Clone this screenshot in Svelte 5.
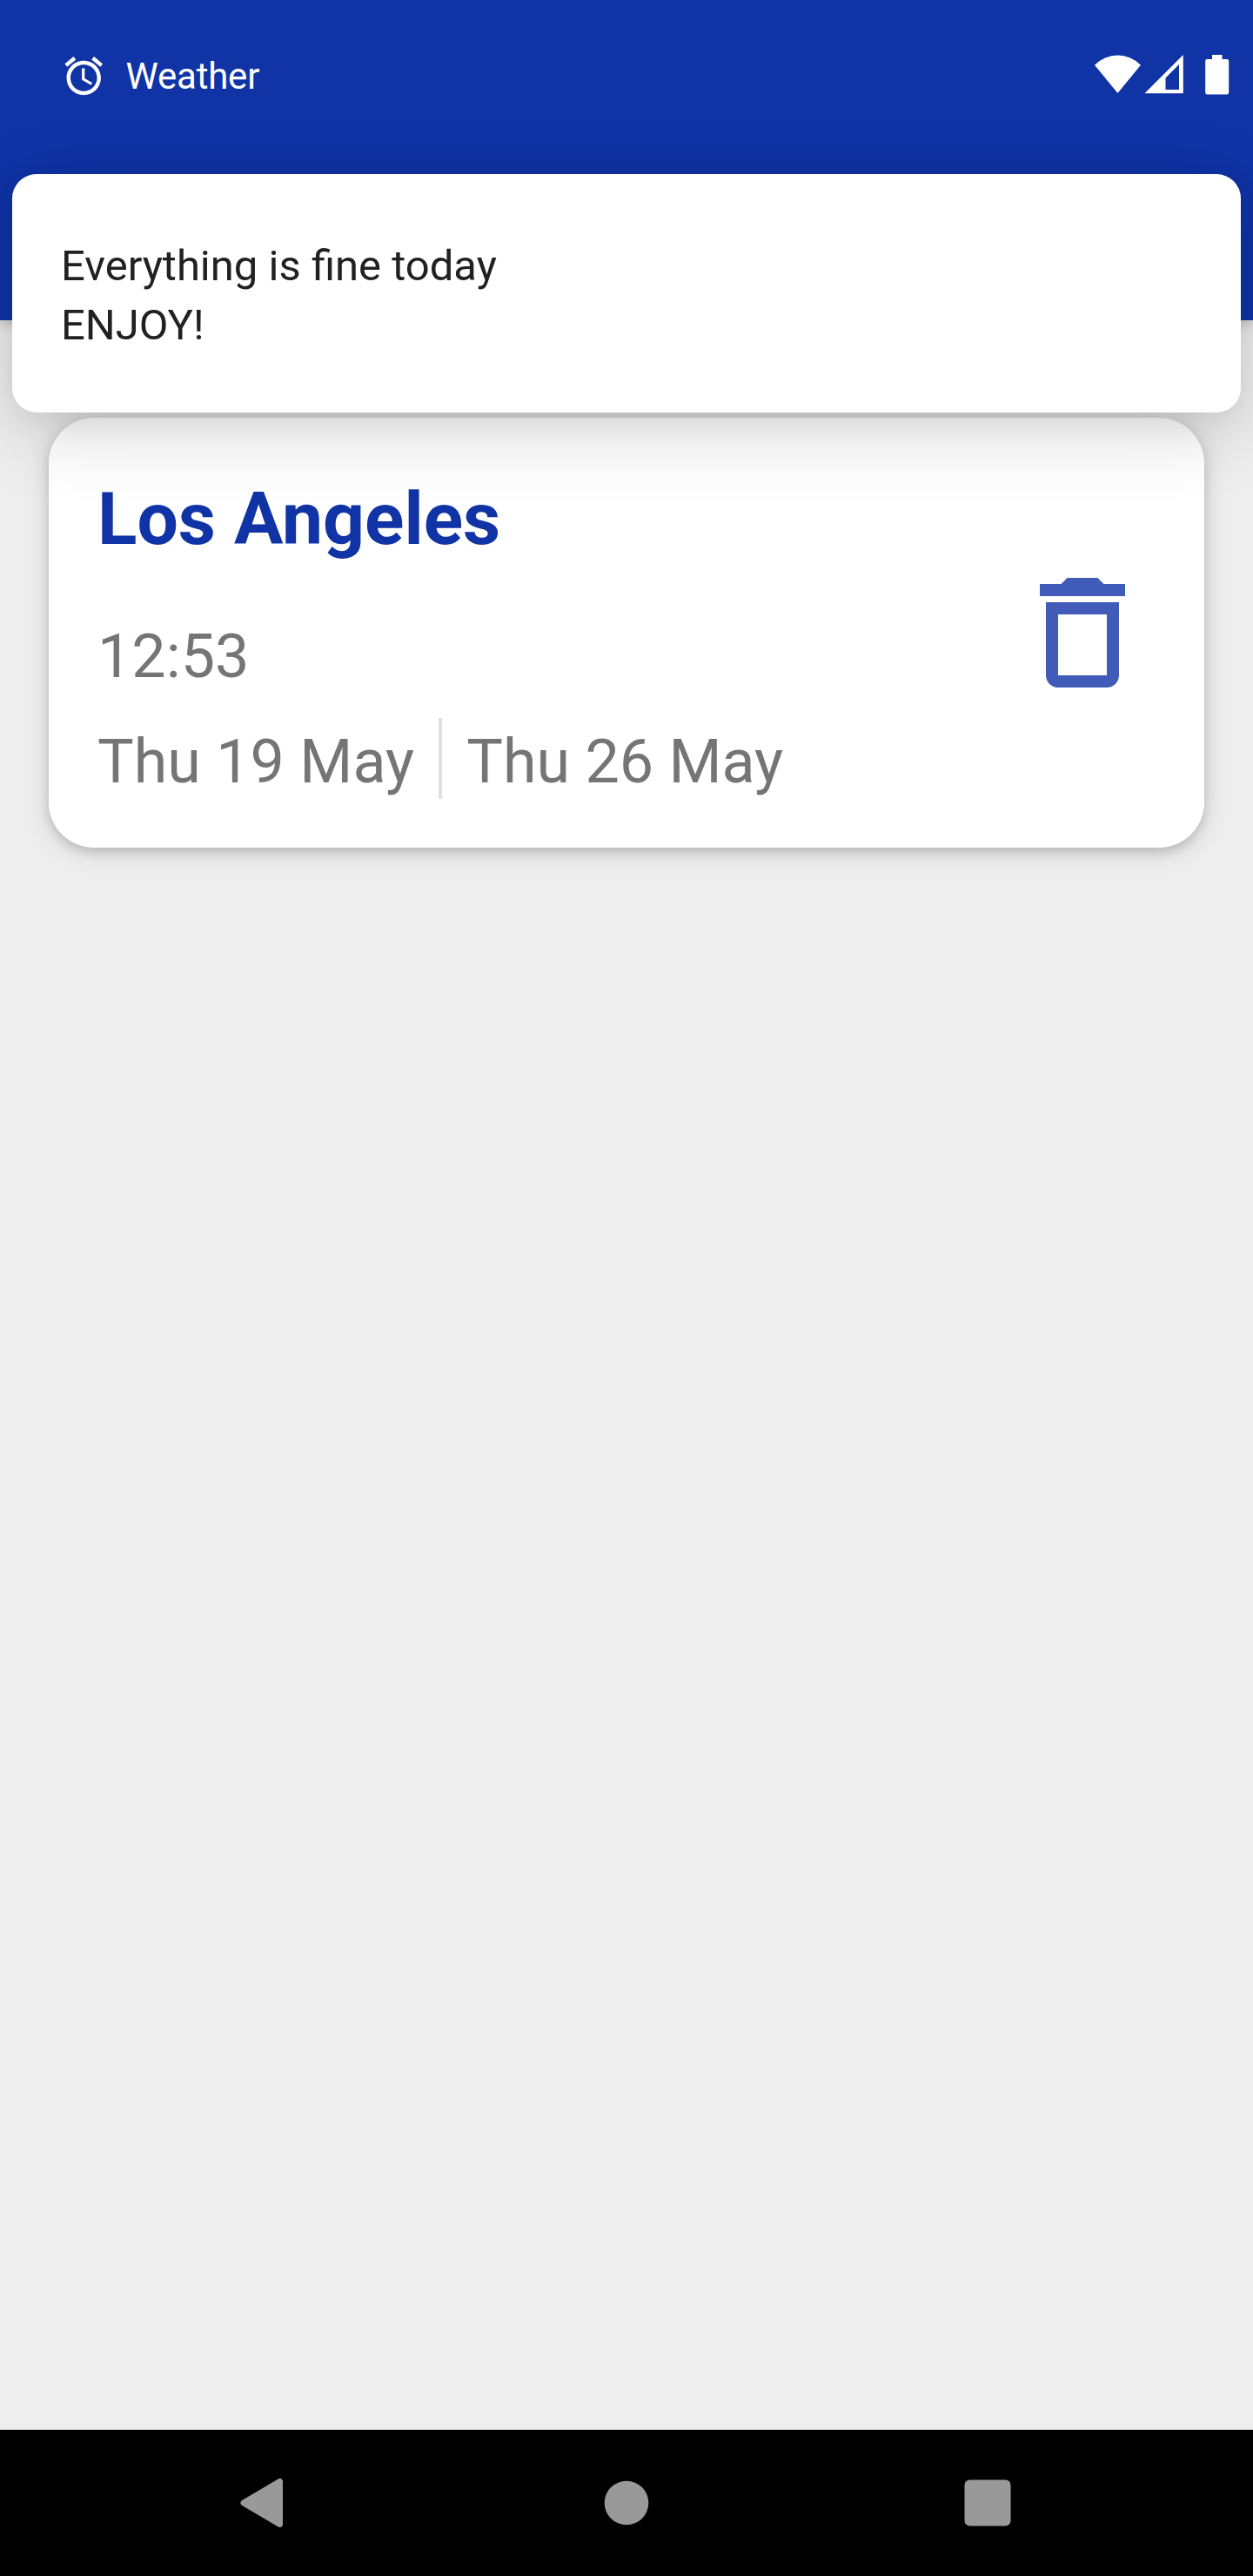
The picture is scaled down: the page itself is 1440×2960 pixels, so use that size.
<script>
  const city = {
    name: 'Los Angeles',
    time: '12:53',
    from: 'Thu 19 May',
    to: 'Thu 26 May'
  };
  const message = ['Everything is fine today', 'ENJOY!'];
</script>

<div class="screen">
  <header class="app-bar">
    <div class="status">
      <svg class="alarm" viewBox="0 0 24 24" aria-hidden="true">
        <path d="M22 5.72l-4.6-3.86-1.29 1.53 4.6 3.86L22 5.72zM7.88 3.39L6.6 1.86 2 5.71l1.29 1.53 4.59-3.85zM12.500 8H11v6l4.750 2.850.750-1.230-4-2.370V8zM12 4c-4.970 0-9 4.030-9 9s4.020 9 9 9c4.970 0 9-4.030 9-9s-4.030-9-9-9zm0 16c-3.870 0-7-3.130-7-7s3.130-7 7-7 7 3.130 7 7-3.130 7-7 7z" />
      </svg>
      <span class="title">Weather</span>
      <svg class="signals" viewBox="0 0 160 52" aria-hidden="true">
        <path d="M30.500 48L4 15.800A37 37 0 0 1 57 15.800Z" />
        <path fill-rule="evenodd" d="M61.500 48.300L105.800 4V48.300ZM85.500 44H101V15L85.500 30.500Z" />
        <path d="M139 4h11.500v5H156q2.200 0 2.200 2.200v36q0 2.200-2.200 2.200h-22.600q-2.200 0-2.200-2.200v-36q0-2.200 2.200-2.200H139z" />
      </svg>
    </div>
  </header>

  <main class="content">
    <article class="card">
      <div class="details">
        <h1>{city.name}</h1>
        <p class="time">{city.time}</p>
        <div class="dates">
          <span>{city.from}</span>
          <i class="divider"></i>
          <span>{city.to}</span>
        </div>
      </div>
      <button class="delete" aria-label="Delete">
        <svg viewBox="0 0 24 24">
          <path fill-rule="evenodd" d="M6 19c0 1.1.9 2 2 2h8c1.1 0 2-.9 2-2V7H6v12zM8 9h8v10H8V9zM15.5 4l-1-1h-5l-1 1H5v2h14V4h-3.5z" />
        </svg>
      </button>
    </article>
  </main>

  <nav class="nav">
    <svg viewBox="0 0 60 60"><path class="back" d="M5 30L46.500 5.500V54.500Z" /></svg>
    <svg viewBox="0 0 60 60"><circle cx="30" cy="30" r="25.300" /></svg>
    <svg viewBox="0 0 60 60"><rect x="3.500" y="3.500" width="53" height="53" rx="6" /></svg>
  </nav>

  <div class="snackbar" role="status">
    {#each message as line}
      <p>{line}</p>
    {/each}
  </div>
</div>

<style>
  :global(body) {
    margin: 0;
  }
  .screen {
    position: relative;
    display: flex;
    flex-direction: column;
    width: 1440px;
    height: 2960px;
    overflow: hidden;
    background: #eee;
    font-family: Roboto, sans-serif;
  }
  h1,
  p {
    margin: 0;
  }
  .app-bar {
    height: 368px;
    flex: none;
    background: #1033a6;
    box-shadow: 0 4px 14px rgba(0, 0, 0, 0.2);
  }
  .status {
    display: flex;
    align-items: center;
    height: 174px;
    padding: 0 26px 0 70px;
    color: #fff;
  }
  .status svg {
    fill: #fff;
  }
  .alarm {
    width: 52.5px;
    height: 52.5px;
  }
  .title {
    flex: 1;
    margin-left: 22px;
    font-size: 42px;
    line-height: 49px;
    padding-top: 1px;
    letter-spacing: -0.2px;
  }
  .signals {
    width: 160px;
    height: 52px;
    margin-top: -4px;
  }
  .content {
    flex: 1;
    padding: 112px 56px 0;
  }
  .card {
    display: flex;
    justify-content: space-between;
    box-sizing: border-box;
    height: 494px;
    padding: 68px 56px 56px;
    border-radius: 52px;
    background: #fff;
    box-shadow:
      0 5px 12px rgba(0, 0, 0, 0.14),
      0 4px 30px rgba(0, 0, 0, 0.14);
  }
  h1 {
    color: #1033a6;
    font-size: 84px;
    font-weight: 700;
    line-height: 98px;
  }
  .time {
    margin-top: 67px;
    color: #757575;
    font-size: 70px;
    line-height: 82px;
  }
  .dates {
    display: flex;
    gap: 28px;
    height: 93px;
    margin-top: 30px;
    color: #757575;
    font-size: 70px;
    line-height: 100px;
    white-space: nowrap;
  }
  .divider {
    width: 4px;
    height: 93px;
    background: #e0e0e0;
  }
  .delete {
    width: 168px;
    height: 168px;
    margin-top: 95px;
    padding: 0;
    border: 0;
    background: none;
  }
  .delete svg {
    display: block;
    fill: #405cb8;
  }
  .nav {
    display: flex;
    flex: none;
    align-items: center;
    justify-content: space-between;
    box-sizing: border-box;
    height: 168px;
    padding: 0 275px;
    background: #000;
  }
  .nav svg {
    width: 60px;
    height: 60px;
    fill: #999;
  }
  .nav .back {
    stroke: #999;
    stroke-width: 7px;
    stroke-linejoin: round;
  }
  .snackbar {
    position: absolute;
    top: 200px;
    left: 14px;
    right: 14px;
    box-sizing: border-box;
    height: 274px;
    padding: 72px 56px 0;
    border-radius: 28px;
    background: #fff;
    color: #212121;
    font-size: 49px;
    line-height: 68px;
    box-shadow:
      0 21px 84px rgba(0, 0, 0, 0.17),
      0 8px 34px rgba(0, 0, 0, 0.06);
  }
</style>
